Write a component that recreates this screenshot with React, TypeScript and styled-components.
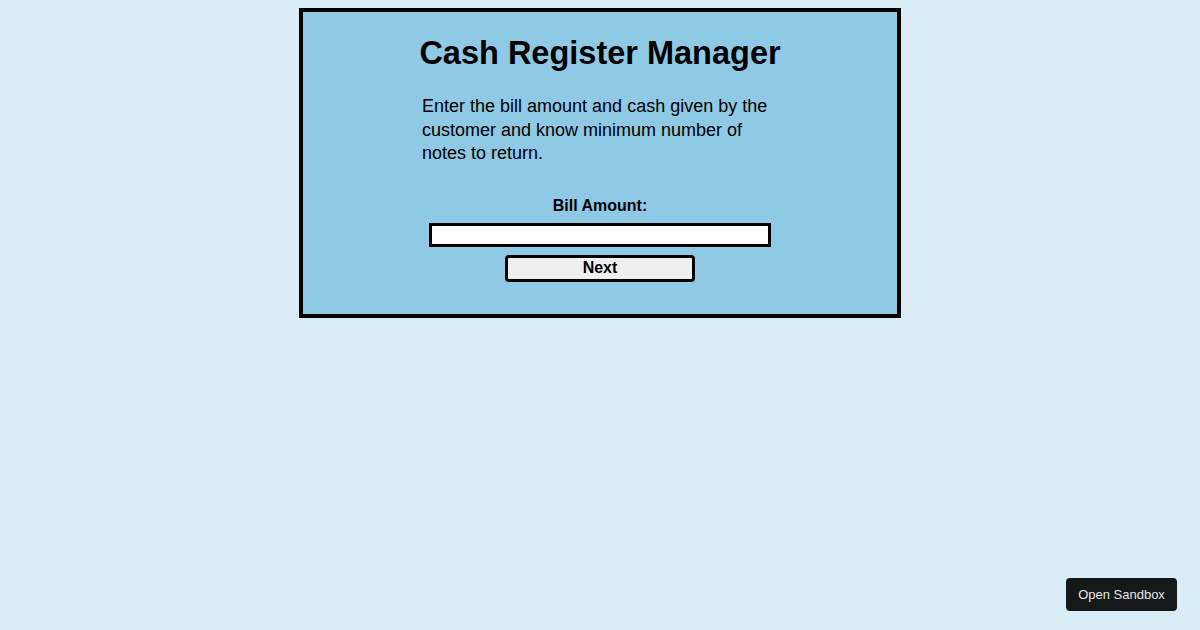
import React, { useState } from 'react';
import styled, { createGlobalStyle } from 'styled-components';

const GlobalStyle = createGlobalStyle`
  html, body {
    margin: 0;
    padding: 0;
    background: #daecf6;
    font-family: "Liberation Sans", Arial, sans-serif;
  }
`;

const Page = styled.div`
  min-height: 630px;
  padding-top: 8px;
  box-sizing: border-box;
`;

const Card = styled.main`
  width: 602px;
  margin: 0 auto;
  box-sizing: border-box;
  border: 4px solid #000;
  background: #8fc9e5;
  padding: 22px 0 32px;
  display: flex;
  flex-direction: column;
  align-items: center;
`;

const Title = styled.h1`
  margin: 0;
  font-size: 32.5px;
  font-weight: 700;
  color: #000;
  line-height: 38px;
`;

const Intro = styled.p`
  width: 356px;
  margin: 23px 0 0;
  font-size: 18px;
  line-height: 23.5px;
  color: #000;
`;

const Form = styled.form`
  display: flex;
  flex-direction: column;
  align-items: center;
  margin-top: 30px;
`;

const Label = styled.label`
  font-size: 16px;
  font-weight: 700;
  line-height: 20px;
  margin-bottom: 7px;
`;

const Input = styled.input`
  width: 342px;
  height: 24px;
  box-sizing: border-box;
  border: 3px solid #000;
  background: #fff;
  outline: none;
  padding: 0 4px;
  font: inherit;
`;

const Button = styled.button`
  width: 190px;
  height: 27px;
  margin-top: 8px;
  box-sizing: border-box;
  border: 3px solid #000;
  border-radius: 4px;
  background: #efefef;
  font-family: inherit;
  font-size: 16px;
  font-weight: 700;
  color: #000;
  cursor: pointer;
  padding: 0;
`;

const SandboxLink = styled.a`
  position: fixed;
  right: 23px;
  bottom: 19px;
  width: 111px;
  height: 33px;
  display: flex;
  align-items: center;
  justify-content: center;
  background: #151819;
  border-radius: 4px;
  color: #e6e6e6;
  font-family: "Liberation Sans", Arial, sans-serif;
  font-size: 13px;
  text-decoration: none;
`;

export default function App() {
  const [bill, setBill] = useState('');

  return (
    <Page>
      <GlobalStyle />
      <Card>
        <Title>Cash Register Manager</Title>
        <Intro>
          Enter the bill amount and cash given by the customer and know minimum number of notes to return.
        </Intro>
        <Form onSubmit={(e) => e.preventDefault()}>
          <Label htmlFor="bill">Bill Amount:</Label>
          <Input id="bill" type="number" value={bill} onChange={(e) => setBill(e.target.value)} />
          <Button type="submit">Next</Button>
        </Form>
      </Card>
      <SandboxLink href="#">Open Sandbox</SandboxLink>
    </Page>
  );
}
